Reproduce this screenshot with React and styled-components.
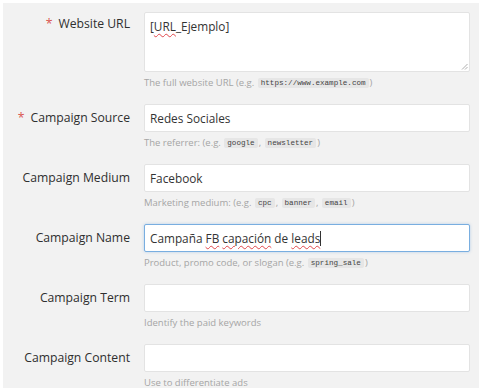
import React from "react";
import styled, { createGlobalStyle } from "styled-components";

const Global = createGlobalStyle`
  html, body { margin: 0; padding: 0; background: #ffffff; }
  body { font-family: "Open Sans", "Noto Sans", sans-serif; }
`;

const Page = styled.div`
  padding: 3px 6px 3px 3px;
  width: 485px;
  height: 391px;
  box-sizing: border-box;
`;

const Panel = styled.form`
  background: #f2f2f2;
  height: 100%;
  box-sizing: border-box;
  padding: 9px 9px 0 0;
  display: flex;
  flex-direction: column;
`;

const Row = styled.div`
  display: grid;
  grid-template-columns: 127px 326px;
  column-gap: 14px;
  align-items: start;
`;

const Label = styled.label`
  font-size: 12.2px;
  line-height: 28px;
  color: #2f2f2f;
  text-align: right;
  white-space: nowrap;
  margin-top: ${(p) => (p.$area ? "-2px" : "0")};
`;

const Star = styled.span`
  color: #d9534f;
  margin-right: 6px;
`;

const Field = styled.div`
  position: relative;
  box-sizing: border-box;
  height: ${(p) => (p.$area ? "60px" : "28px")};
  background: #fff;
  border: 1px solid ${(p) => (p.$focus ? "#79aee0" : "#e3e3e3")};
  box-shadow: ${(p) => (p.$focus ? "0 0 3px rgba(102,160,220,0.45)" : "none")};
  border-radius: 2px;
  padding: ${(p) => (p.$area ? "3px 5px" : "0 5px")};
  font-size: 11.8px;
  line-height: ${(p) => (p.$area ? "20px" : "26px")};
  color: #333;
  white-space: nowrap;
`;

const Typo = styled.span`
  text-decoration: underline wavy #e0474c;
  text-decoration-thickness: 1px;
  text-underline-offset: 2px;
`;

const Caret = styled.span`
  display: inline-block;
  width: 1px;
  height: 15px;
  background: #333;
  vertical-align: -3px;
`;

const Grip = styled.svg`
  position: absolute;
  right: 1px;
  bottom: 1px;
`;

const Help = styled.div`
  grid-column: 2;
  height: 14px;
  margin: 4px 0 14px;
  font-size: 9.5px;
  line-height: 14px;
  color: #a5a5a5;
  white-space: nowrap;
`;

const Code = styled.code`
  font-family: "Liberation Mono", "DejaVu Sans Mono", monospace;
  font-size: 7.6px;
  line-height: 10px;
  display: inline-block;
  vertical-align: 1px;
  color: #444;
  background: #e6e6e6;
  border-radius: 2px;
  padding: 0 3px;
  margin: 0 1px;
`;

const rows = [
  {
    label: "Website URL",
    req: true,
    area: true,
    value: (
      <>
        [<Typo>URL</Typo>_Ejemplo]
      </>
    ),
    help: (
      <>
        The full website URL (e.g. <Code>https://www.example.com</Code>)
      </>
    ),
  },
  {
    label: "Campaign Source",
    req: true,
    value: "Redes Sociales",
    help: (
      <>
        The referrer: (e.g. <Code>google</Code>, <Code>newsletter</Code>)
      </>
    ),
  },
  {
    label: "Campaign Medium",
    value: "Facebook",
    help: (
      <>
        Marketing medium: (e.g. <Code>cpc</Code>, <Code>banner</Code>,{" "}
        <Code>email</Code>)
      </>
    ),
  },
  {
    label: "Campaign Name",
    focus: true,
    value: (
      <>
        Campaña <Typo>FB</Typo> <Typo>capación</Typo> de <Typo>leads</Typo>
        <Caret />
      </>
    ),
    help: (
      <>
        Product, promo code, or slogan (e.g. <Code>spring_sale</Code>)
      </>
    ),
  },
  { label: "Campaign Term", value: "", help: "Identify the paid keywords" },
  { label: "Campaign Content", value: "", help: "Use to differentiate ads" },
];

export default function App() {
  return (
    <Page>
      <Global />
      <Panel>
        {rows.map((r) => (
          <Row key={r.label}>
            <Label $area={r.area}>
              {r.req && <Star>*</Star>}
              {r.label}
            </Label>
            <Field $area={r.area} $focus={r.focus}>
              {r.value}
              {r.area && (
                <Grip width="7" height="7" viewBox="0 0 7 7">
                  <path d="M6.5 1 L1 6.5 M6.5 4 L4 6.5" stroke="#999" strokeWidth="0.8" />
                </Grip>
              )}
            </Field>
            <Help>{r.help}</Help>
          </Row>
        ))}
      </Panel>
    </Page>
  );
}
